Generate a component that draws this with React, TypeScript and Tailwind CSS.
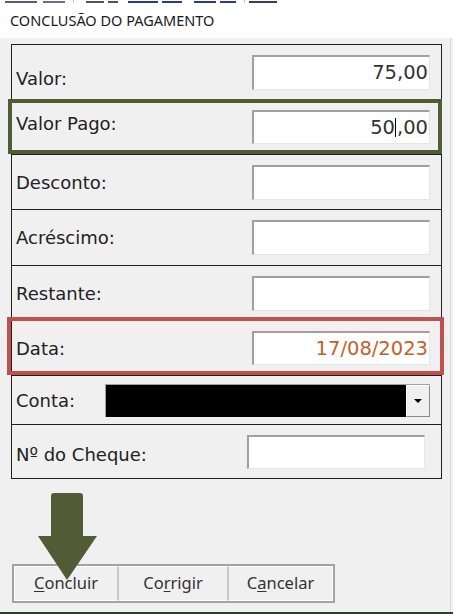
import React from 'react';

const labelFont = { fontFamily: '"DejaVu Sans", Verdana, sans-serif' };

const Field: React.FC<{ children?: React.ReactNode; className?: string }> = ({ children, className = '' }) => (
  <div
    className={`h-[35px] w-[178px] box-border border-t-2 border-l-2 border-b border-r border-t-[#a0a0a0] border-l-[#a0a0a0] border-b-[#e6e6e6] border-r-[#e6e6e6] bg-white flex items-center justify-end pr-[1px] text-[19.5px] leading-none text-[#333] ${className}`}
    style={labelFont}
  >
    {children}
  </div>
);

const Row: React.FC<{ label: string; labelClass?: string; first?: boolean; h: string; children?: React.ReactNode; overlay?: React.ReactNode }> = ({
  label,
  labelClass = '',
  first,
  h,
  children,
  overlay,
}) => (
  <div className={`relative flex items-center pl-[4px] pr-[11px] ${h} ${first ? '' : 'border-t border-[#1e1e1e]'}`}>
    <span className={`flex-1 text-[18px] text-[#222] ${labelClass}`} style={labelFont}>
      {label}
    </span>
    {children}
    {overlay}
  </div>
);

export default function App() {
  return (
    <div className="relative w-[453px] h-[614px] overflow-hidden bg-[#f0f0f0]" style={{ fontFamily: '"Noto Sans", "Open Sans", sans-serif' }}>
      {/* title bar */}
      <div className="relative h-[38px] bg-white">
        <div className="flex h-[3px] items-start">
          <div className="ml-[5px] mt-[1px] h-[2px] w-[32px] bg-[#5a5a7a]" />
          <div className="ml-[6px] mt-[1px] h-[2px] w-[22px] bg-[#6b6b8a]" />
          <div className="ml-[8px] h-[3px] w-px bg-[#c8c8c8]" />
          <div className="ml-[12px] mt-[1px] h-[2px] w-[18px] bg-[#555]" />
          <div className="ml-[4px] mt-[1px] h-[2px] w-[10px] bg-[#555]" />
          <div className="ml-[10px] mt-[1px] h-[2px] w-[30px] bg-[#2c3a8c]" />
          <div className="ml-[4px] mt-[1px] h-[2px] w-[20px] bg-[#2c3a8c]" />
          <div className="ml-[12px] mt-[1px] h-[2px] w-[22px] bg-[#2c3a8c]" />
          <div className="ml-[4px] mt-[1px] h-[2px] w-[16px] bg-[#2c3a8c]" />
          <div className="ml-[8px] h-[3px] w-px bg-[#c8c8c8]" />
          <div className="ml-[4px] mt-[1px] h-[2px] w-[28px] bg-[#3a3a66]" />
        </div>
        <div className="pl-[10px] pt-[8px] text-[14.5px] leading-[18px] text-[#1a1a1a]">CONCLUSÃO DO PAGAMENTO</div>
      </div>

      <div className="pt-[6px] pl-[11px] pr-[11px]">
        <div className="w-[431px] border border-[#1e1e1e]">
          <Row label="Valor:" first h="h-[54px]" labelClass="pt-[12px]">
            <Field>75,00</Field>
          </Row>
          <Row
            label="Valor Pago:"
            h="h-[55px]"
            labelClass="pb-[7px]"
            overlay={<div className="pointer-events-none absolute -left-[4px] -right-[1px] -top-[1px] bottom-0 border-4 border-[#515b36]" />}
          >
            <Field className="!h-[34px]">
              <span>50</span>
              <span className="mx-[0.5px] inline-block h-[19px] w-px bg-black" />
              <span>,00</span>
            </Field>
          </Row>
          <Row label="Desconto:" h="h-[55px]">
            <Field />
          </Row>
          <Row label="Acréscimo:" h="h-[56px]">
            <Field />
          </Row>
          <Row label="Restante:" h="h-[55px]">
            <Field />
          </Row>
          <Row
            label="Data:"
            h="h-[55px]"
            overlay={<div className="pointer-events-none absolute -left-[5px] -right-[3px] -top-[4px] bottom-0 border-4 border-[#bf514e]" />}
          >
            <Field className="!h-[34px]">
              <span className="text-[#c4612d]">17/08/2023</span>
            </Field>
          </Row>
          <Row label="Conta:" h="h-[49px]" labelClass="!flex-none w-[89px]">
            <div className="flex flex-1 h-[33px] border-t border-l border-[#a0a0a0]">
              <div className="flex-1 bg-black" />
              <div className="flex w-[24px] items-center justify-center border-t border-l border-white border-r border-b border-r-[#8a8a8a] border-b-[#8a8a8a] bg-[#f0f0f0]">
                <svg width="8" height="4" viewBox="0 0 8 4">
                  <path d="M0 0 H8 L4 4 Z" fill="#000" />
                </svg>
              </div>
            </div>
          </Row>
          <Row label="Nº do Cheque:" h="h-[54px]" labelClass="pt-[6px]">
            <Field className="mr-[5px] !h-[34px]" />
          </Row>
        </div>
      </div>

      {/* buttons */}
      <div className="mt-[85px] ml-[12px] flex h-[39px] w-[323px] border-2 border-[#a3a3a3] bg-[#f0f0f0] text-[16.5px] text-[#333]">
        <button className="flex w-[104px] items-center justify-center border border-white border-r-[#c8c8c8]">
          <span><span className="underline underline-offset-2">C</span>oncluir</span>
        </button>
        <button className="flex w-[110px] items-center justify-center border border-white border-l-[#c8c8c8] border-r-[#c8c8c8]">
          <span>Co<span className="underline underline-offset-2">r</span>rigir</span>
        </button>
        <button className="flex flex-1 items-center justify-center border border-white border-l-[#c8c8c8]">
          <span>C<span className="underline underline-offset-2">a</span>ncelar</span>
        </button>
      </div>

      <div className="absolute left-0 right-0 bottom-0 h-[2px] bg-[#1c4a24]" />
      <div className="absolute right-[2px] top-[38px] bottom-[2px] w-px bg-[#dcdcdc]" />

      {/* annotation arrow */}
      <svg className="pointer-events-none absolute left-[37px] top-[492px]" width="61" height="90" viewBox="0 0 61 90">
        <path d="M14 44 V4 Q14 1 17 1 H43 Q46 1 46 4 V44 H60 L30 88 L1 44 Z" fill="#515b36" />
      </svg>
    </div>
  );
}
